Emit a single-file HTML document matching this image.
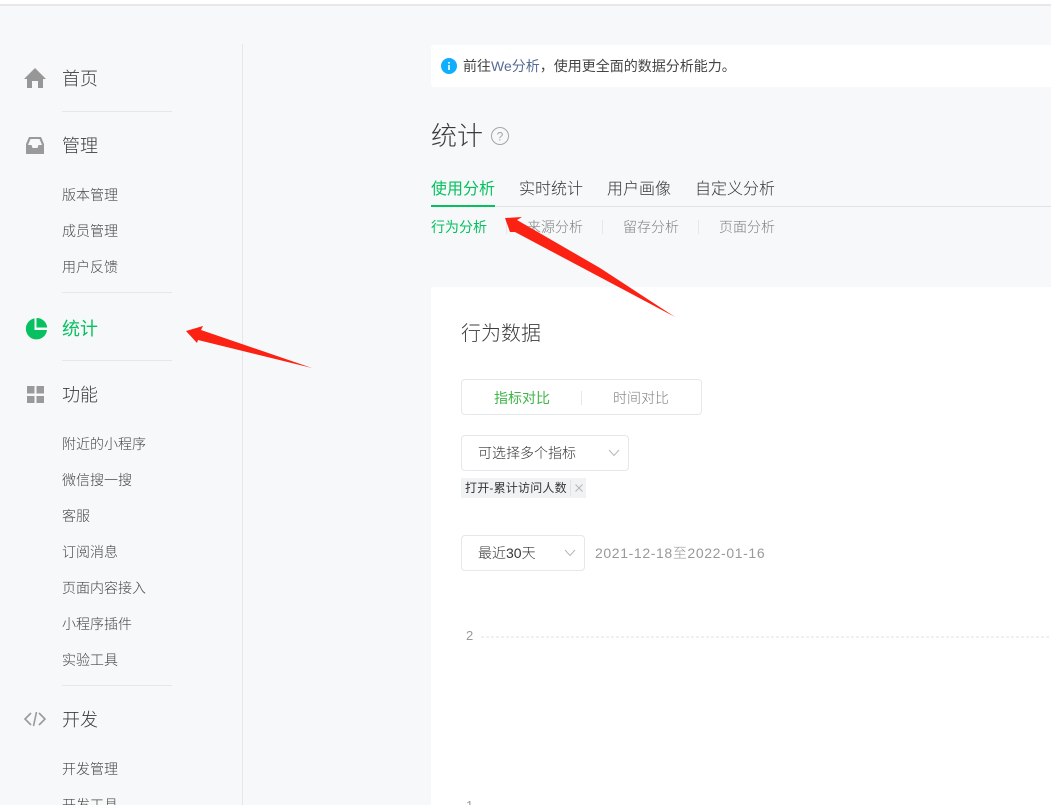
<!DOCTYPE html>
<html lang="zh"><head><meta charset="utf-8">
<style>
html,body{margin:0;padding:0;width:1051px;height:805px;overflow:hidden;background:#f6f8f9}
body{position:relative;font-family:"Liberation Sans","Noto Sans CJK SC",sans-serif;font-weight:300;color:#353535}
.t{position:absolute;white-space:nowrap;line-height:20px;height:20px}
.m{font-size:18px;left:62px;color:#3c3c3c}
.s{font-size:14px;left:62px;color:#484848}
.g{font-weight:400}
.hr{position:absolute;left:62px;width:110px;height:1px;background:#e7e7eb}
.box{position:absolute;box-sizing:border-box;background:#fff;border:1px solid #e4e8eb;border-radius:4px}
svg{position:absolute;left:0;top:0}
</style></head><body>
<div style="position:absolute;left:0;top:0;width:1051px;height:4px;background:#fff;border-bottom:2px solid #e6e7e9"></div>
<div style="position:absolute;left:242px;top:44px;width:1px;height:761px;background:#e7e7eb"></div>

<div class="t m" style="top:69px">首页</div>
<div class="hr" style="top:111px"></div>
<div class="t m" style="top:136px">管理</div>
<div class="t s" style="top:185px">版本管理</div>
<div class="t s" style="top:221px">成员管理</div>
<div class="t s" style="top:257px">用户反馈</div>
<div class="hr" style="top:292px"></div>
<div class="t m g" style="top:319px;color:#07c160">统计</div>
<div class="hr" style="top:360px"></div>
<div class="t m" style="top:385px">功能</div>
<div class="t s" style="top:434px">附近的小程序</div>
<div class="t s" style="top:470px">微信搜一搜</div>
<div class="t s" style="top:506px">客服</div>
<div class="t s" style="top:542px">订阅消息</div>
<div class="t s" style="top:578px">页面内容接入</div>
<div class="t s" style="top:614px">小程序插件</div>
<div class="t s" style="top:650px">实验工具</div>
<div class="hr" style="top:685px"></div>
<div class="t m" style="top:710px">开发</div>
<div class="t s" style="top:759px">开发管理</div>
<div class="t s" style="top:795px">开发工具</div>

<div style="position:absolute;left:431px;top:45px;width:620px;height:42px;background:#fff;border-radius:3px 0 0 3px"></div>
<div class="t g" style="left:463px;top:56px;font-size:14px;color:#444">前往<span style="color:#576b95">We分析</span>，使用更全面的数据分析能力。</div>
<div class="t" style="left:431px;top:121px;font-size:26px;line-height:30px;height:30px;color:#3c3c3c">统计</div>

<div class="t g" style="left:431px;top:180px;font-size:16px;color:#07c160">使用分析</div>
<div class="t" style="left:519px;top:180px;font-size:16px">实时统计</div>
<div class="t" style="left:607px;top:180px;font-size:16px">用户画像</div>
<div class="t" style="left:695px;top:180px;font-size:16px">自定义分析</div>
<div style="position:absolute;left:431px;top:206px;width:620px;height:1px;background:#e0e2e4"></div>
<div style="position:absolute;left:431px;top:205px;width:64px;height:2px;background:#07c160"></div>

<div class="t g" style="left:431px;top:217px;font-size:14px;color:#07c160">行为分析</div>
<div class="t" style="left:527px;top:217px;font-size:14px;color:#808080">来源分析</div>
<div class="t" style="left:623px;top:217px;font-size:14px;color:#808080">留存分析</div>
<div class="t" style="left:719px;top:217px;font-size:14px;color:#808080">页面分析</div>
<div style="position:absolute;left:506px;top:220px;width:1px;height:14px;background:#e4e8eb"></div>
<div style="position:absolute;left:602px;top:220px;width:1px;height:14px;background:#e4e8eb"></div>
<div style="position:absolute;left:698px;top:220px;width:1px;height:14px;background:#e4e8eb"></div>

<div style="position:absolute;left:431px;top:287px;width:620px;height:518px;background:#fff;border-radius:3px 0 0 0"></div>
<div class="t" style="left:461px;top:324px;font-size:20px;color:#3c3c3c">行为数据</div>

<div class="box" style="left:461px;top:379px;width:241px;height:36px"></div>
<div class="t g" style="left:494px;top:388px;font-size:14px;color:#3fb54a">指标对比</div>
<div style="position:absolute;left:581px;top:391px;width:1px;height:14px;background:#e4e8eb"></div>
<div class="t" style="left:613px;top:388px;font-size:14px;color:#808080">时间对比</div>

<div class="box" style="left:461px;top:435px;width:168px;height:36px"></div>
<div class="t" style="left:478px;top:443px;font-size:14px">可选择多个指标</div>

<div style="position:absolute;left:461px;top:478px;width:125px;height:20px;background:#f1f2f3"></div>
<div style="position:absolute;left:570px;top:480px;width:1px;height:16px;background:#e0e2e4"></div>
<div class="t g" style="left:465px;top:478px;font-size:12px;letter-spacing:.2px">打开-累计访问人数</div>

<div class="box" style="left:461px;top:535px;width:124px;height:36px"></div>
<div class="t" style="left:478px;top:543px;font-size:14px">最近30天</div>
<div class="t" style="left:595px;top:543px;font-size:14px;letter-spacing:.62px;color:#999">2021-12-18至2022-01-16</div>

<div class="t" style="left:466px;top:626px;font-size:13px;color:#9a9a9a">2</div>
<div class="t" style="left:466px;top:796px;font-size:13px;color:#9a9a9a">1</div>
<div style="position:absolute;left:481px;top:636px;width:570px;height:2px;background:repeating-linear-gradient(90deg,#f0f0f0 0,#f0f0f0 3px,transparent 3px,transparent 5px)"></div>

<svg width="1051" height="805" viewBox="0 0 1051 805">
  <!-- sidebar icons -->
  <path d="M35 68 L46 79 L43 79 L43 88 L38 88 L38 81 L32 81 L32 88 L27 88 L27 79 L24 79 Z" fill="#979797"/>
  <path d="M29 137 H41 L44 144 V154 H26 V144 Z" fill="#9a9a9a"/>
  <path d="M30.500 139 H39.500 L42 145 H38.500 L37.500 148 H32.500 L31.500 145 H28 Z" fill="#f6f8f9"/>
  <path d="M34.500 318.400 A10.600 10.600 0 1 0 47 330 H34.500 Z" fill="#07c160"/>
  <path d="M36.500 318 A10.600 10.600 0 0 1 47.200 327.500 H36.500 Z" fill="#07c160"/>
  <rect x="27" y="386" width="7.500" height="7.500" fill="#9a9a9a"/><rect x="36.500" y="386" width="7.500" height="7.500" fill="#9a9a9a"/>
  <rect x="27" y="396" width="7.500" height="7" fill="#9a9a9a"/><rect x="36.500" y="396" width="7.500" height="7" fill="#9a9a9a"/>
  <path d="M31 713 L25 719 L31 725 M39 713 L45 719 L39 725 M36.500 712 L33.500 726" fill="none" stroke="#9a9a9a" stroke-width="1.600"/>

  <!-- info -->
  <circle cx="449" cy="66" r="8" fill="#10aeff"/>
  <rect x="448.200" y="65" width="1.600" height="5" fill="#fff"/><rect x="448.200" y="62" width="1.600" height="1.600" fill="#fff"/>
  <!-- help -->
  <circle cx="500" cy="136" r="8.500" fill="none" stroke="#a6a6a6" stroke-width="1"/>
  <text x="500" y="140.500" font-size="12" text-anchor="middle" fill="#a6a6a6" font-family="Liberation Sans">?</text>

  <!-- chevrons -->
  <path d="M609 450 L614 455.500 L619 450" fill="none" stroke="#b8b8b8" stroke-width="1"/>
  <path d="M565 550 L570 555.500 L575 550" fill="none" stroke="#b8b8b8" stroke-width="1"/>
  <!-- tag x -->
  <path d="M575.500 484.500 L582.500 491.500 M582.500 484.500 L575.500 491.500" stroke="#b5b5b5" stroke-width="1" fill="none"/>

  <!-- arrows -->
  <path d="M186 331 L203 326 L201 330 L312 368 L198 340 L197 343 Z" fill="#fb2113"/>
  <path d="M505 218 L522 217 L517 220 L600 268 L675 317 L515 232 L510 232 Z" fill="#fb2113"/>
</svg>
</body></html>
